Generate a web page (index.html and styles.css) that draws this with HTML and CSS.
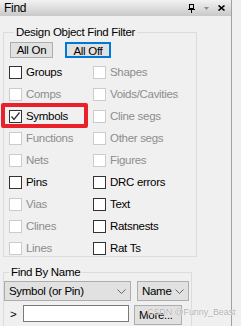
FILE: index.html
```html
<!DOCTYPE html>
<html lang="en">
<head>
  <meta charset="UTF-8">
  <meta name="viewport" content="width=device-width, initial-scale=1.0">
  <title>Find</title>
  <link rel="stylesheet" href="styles.css">
</head>
<body>

  <div class="window">
    <div class="panel">
      <div class="titlebar">
        <span class="title">Find</span>
        <div class="title-icons">
          <svg class="pin" width="7" height="9" viewBox="0 0 7 9">
            <rect x="1.5" y="0.5" width="4" height="4" fill="none" stroke="#000"/>
            <rect x="0" y="5" width="7" height="1" fill="#000"/>
            <rect x="3" y="6" width="1" height="3" fill="#000"/>
          </svg>
          <svg class="menu" width="5" height="3" viewBox="0 0 5 3">
            <polygon points="0,0 5,0 2.5,3" fill="#8a8a8a"/>
          </svg>
          <svg class="close" width="7" height="6" viewBox="0 0 7 6">
            <path d="M0.5 0.5 L6.5 5.5 M6.5 0.5 L0.5 5.5" stroke="#000" stroke-width="1.6"/>
          </svg>
        </div>
      </div>

      <fieldset class="group filter">
        <legend>Design Object Find Filter</legend>

        <div class="button-row">
          <button class="btn">All On</button>
          <button class="btn focused">All Off</button>
        </div>

        <div class="checks">
          <label class="check"><span class="box"></span>Groups</label>
          <label class="check disabled"><span class="box"></span>Shapes</label>
          <label class="check disabled"><span class="box"></span>Comps</label>
          <label class="check disabled"><span class="box"></span>Voids/Cavities</label>
          <label class="check">
            <span class="box">
              <svg width="11" height="11" viewBox="0 0 11 11"><path d="M1.5 5.5 L4 8.5 L9.5 1.5" fill="none" stroke="#333" stroke-width="1.3"/></svg>
            </span>Symbols
          </label>
          <label class="check disabled"><span class="box"></span>Cline segs</label>
          <label class="check disabled"><span class="box"></span>Functions</label>
          <label class="check disabled"><span class="box"></span>Other segs</label>
          <label class="check disabled"><span class="box"></span>Nets</label>
          <label class="check disabled"><span class="box"></span>Figures</label>
          <label class="check"><span class="box"></span>Pins</label>
          <label class="check"><span class="box"></span>DRC errors</label>
          <label class="check disabled"><span class="box"></span>Vias</label>
          <label class="check"><span class="box"></span>Text</label>
          <label class="check disabled"><span class="box"></span>Clines</label>
          <label class="check"><span class="box"></span>Ratsnests</label>
          <label class="check disabled"><span class="box"></span>Lines</label>
          <label class="check"><span class="box"></span>Rat Ts</label>
        </div>
      </fieldset>

      <fieldset class="group byname">
        <legend>Find By Name</legend>

        <div class="combo-row">
          <div class="combo wide">Symbol (or Pin)
            <svg class="chev" width="9" height="5" viewBox="0 0 9 5"><polyline points="0.5,0.5 4.5,4.5 8.5,0.5" fill="none" stroke="#666"/></svg>
          </div>
          <div class="combo narrow">Name
            <svg class="chev" width="9" height="5" viewBox="0 0 9 5"><polyline points="0.5,0.5 4.5,4.5 8.5,0.5" fill="none" stroke="#666"/></svg>
          </div>
        </div>

        <div class="input-row">
          <span class="arrow">&gt;</span>
          <div class="textbox"></div>
          <button class="btn more">More...</button>
        </div>
      </fieldset>

      <div class="highlight"></div>
    </div>
  </div>

  <div class="watermark">CSDN @Funny_Beast</div>

</body>
</html>
```

FILE: styles.css
```css
body {
  margin: 0;
  background-color: #f0f0f0;
  font-family: "Liberation Sans", Arial, sans-serif;
  font-size: 11px;
  letter-spacing: -0.3px;
  color: #000;
  position: relative;
}

.window {
  display: flex;
  width: 241px;
  height: 326px;
  overflow: hidden;
}

.panel {
  position: relative;
  width: 231px;
  height: 326px;
  border-right: 1px solid #a0a0a0;
  flex-shrink: 0;
}

.titlebar {
  height: 16px;
  display: flex;
  align-items: center;
  background: linear-gradient(#f2f2f2, #c9c9c9);
  padding-left: 4px;
}

.title {
  font-size: 12px;
  flex: 1;
}

.title-icons {
  display: flex;
  align-items: center;
  gap: 9px;
  padding-right: 6px;
}

.group {
  margin: 0 0 0 3px;
  width: 187px;
  border: 1px solid #dcdcdc;
  box-sizing: content-box;
  min-width: 0;
}

.group legend {
  padding: 0 2px;
  margin-left: 5px;
  line-height: 14px;
  font-size: 11.5px;
}

.filter {
  margin-top: 9px;
  height: 230px;
  padding: 0 0 0 5px;
}

.button-row {
  display: flex;
  gap: 12px;
  margin-top: 3px;
  padding-left: 1px;
}

.btn {
  font-family: inherit;
  font-size: 11.5px;
  letter-spacing: -0.3px;
  background-color: #e1e1e1;
  border: 1px solid #adadad;
  height: 16px;
  padding: 0;
  margin: 0;
  line-height: 14px;
  color: #000;
}

.button-row .btn {
  width: 43px;
}

.btn.focused {
  width: 46px;
  border: 2px solid #0078d7;
}

.checks {
  display: grid;
  grid-template-columns: 84px 1fr;
  grid-auto-rows: 22px;
  margin-top: 3px;
  font-size: 11.5px;
}

.check {
  display: flex;
  align-items: center;
  gap: 4px;
}

.box {
  width: 11px;
  height: 11px;
  border: 1px solid #333;
  background-color: #fff;
  display: flex;
  align-items: center;
  justify-content: center;
}

.check.disabled {
  color: #8d8d8d;
}

.check.disabled .box {
  border-color: #cccccc;
}

.byname {
  margin-top: 8px;
  height: 60px;
  padding: 0;
  font-size: 11.5px;
}

.combo-row {
  display: flex;
  gap: 6px;
  margin-top: 2px;
}

.combo {
  height: 20px;
  background-color: #e1e1e1;
  border: 1px solid #adadad;
  display: flex;
  align-items: center;
  padding-left: 4px;
  box-sizing: border-box;
}

.combo.wide {
  width: 127px;
}

.combo.narrow {
  width: 52px;
}

.chev {
  margin-left: auto;
  margin-right: 4px;
}

.input-row {
  display: flex;
  align-items: flex-start;
  margin-top: 4px;
}

.arrow {
  width: 19px;
  padding-left: 6px;
  padding-top: 3px;
  box-sizing: border-box;
}

.textbox {
  width: 104px;
  height: 15px;
  border: 1px solid #7a7a7a;
  background-color: #fff;
  margin-right: 5px;
}

.btn.more {
  width: 48px;
  height: 20px;
  text-align: left;
  padding-left: 4px;
}

.highlight {
  position: absolute;
  left: 1px;
  top: 103px;
  width: 79px;
  height: 17px;
  border: 4px solid #e8212b;
  border-radius: 2px;
}

.watermark {
  position: absolute;
  left: 147px;
  top: 307px;
  font-family: "Liberation Sans", sans-serif;
  font-size: 9px;
  letter-spacing: -0.1px;
  color: rgba(160, 160, 160, 0.85);
  text-shadow: 0 0 1px #fff, 0 0 1px #fff;
  white-space: nowrap;
}
```
